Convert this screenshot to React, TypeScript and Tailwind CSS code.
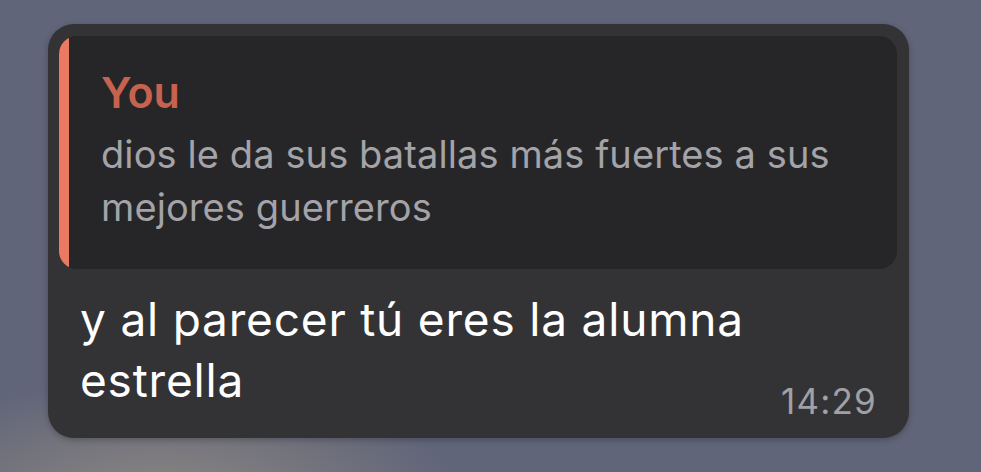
export default function App() {
  return (
    <div
      className="relative h-[472px] w-full overflow-hidden pl-[48px] pt-[24px]"
      style={{ fontFamily: 'Inter, "Noto Sans", sans-serif' }}
    >
      <div className="absolute inset-0 bg-[#616579]" />
      <div className="absolute inset-0 bg-[radial-gradient(ellipse_300px_120px_at_160px_500px,#8c8782_0%,rgba(97,101,121,0)_100%)]" />
      <div className="relative flex h-[414px] w-[861px] flex-col rounded-[26px] bg-[#333336] px-[11px] pt-[12px] shadow-[0_2px_6px_rgba(0,0,0,0.25)]">
        <div className="flex h-[233px] w-[838px] overflow-hidden rounded-[18px] bg-[#262628]">
          <div className="w-[10px] shrink-0 bg-[#ea7a62]" />
          <div className="flex flex-col pl-[32px] pt-[32px]">
            <div className="text-[43px] font-semibold leading-[48px] text-[#c7624f]">You</div>
            <div className="mt-[12px] text-[38px] leading-[53px] tracking-[0.1px] text-[#a3a3a8]">
              dios le da sus batallas más fuertes a sus
              <br />
              mejores guerreros
            </div>
          </div>
        </div>
        <div className="relative pl-[21px] pt-[20px] text-[46px] leading-[61px] tracking-[0.8px] text-white">
          y al parecer tú eres la alumna
          <br />
          estrella
          <div className="absolute bottom-[-10px] right-[21px] text-[35px] leading-[40px] tracking-[1.2px] text-[#a0a0a5]">14:29</div>
        </div>
      </div>
    </div>
  );
}
